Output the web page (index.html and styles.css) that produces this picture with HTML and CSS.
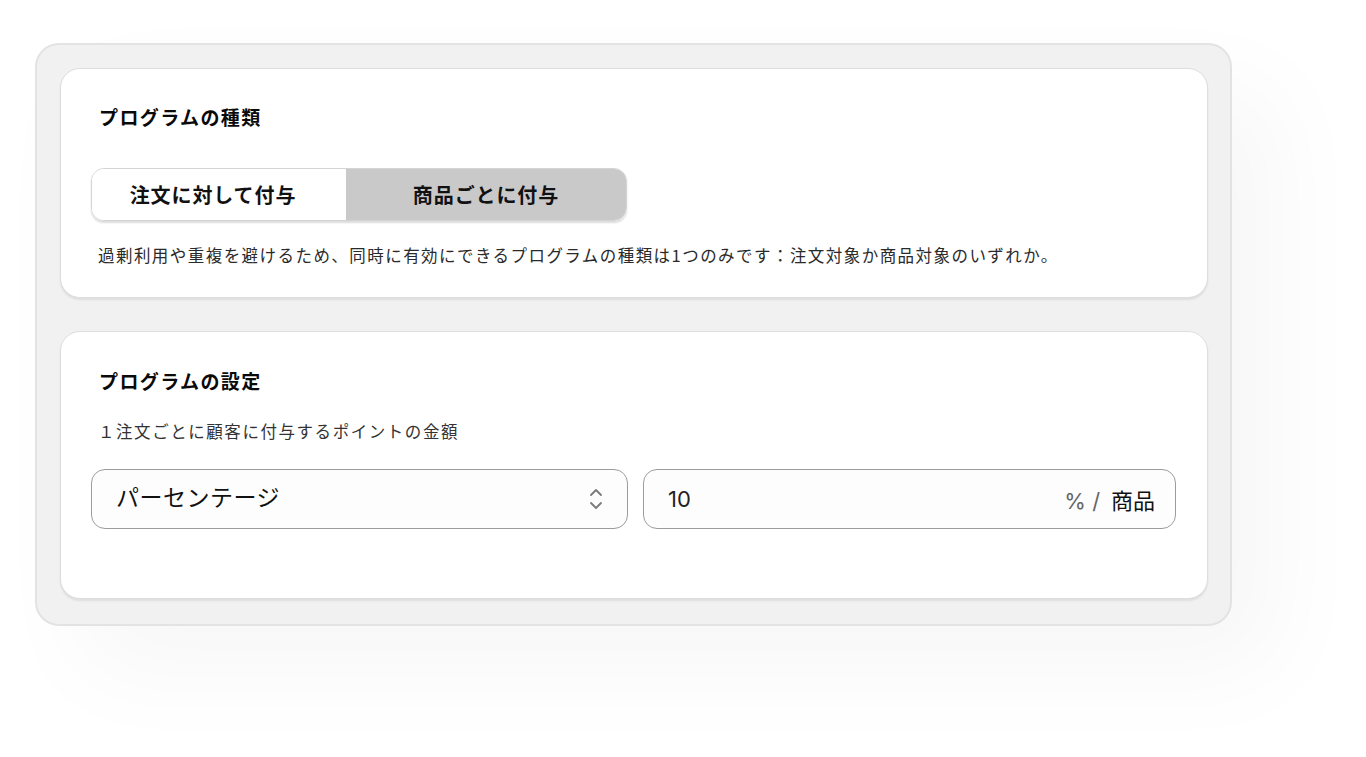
FILE: index.html
```html
<!DOCTYPE html>
<html lang="ja">
<head>
<meta charset="utf-8">
<link rel="stylesheet" href="styles.css">
</head>
<body>
<div class="shell">
  <section class="card card-type">
    <h2 class="title">プログラムの種類</h2>
    <div class="toggle">
      <div class="seg seg-left">注文に対して付与</div>
      <div class="seg seg-right">商品ごとに付与</div>
    </div>
    <p class="desc">過剰利用や重複を避けるため、同時に有効にできるプログラムの種類は1つのみです：注文対象か商品対象のいずれか。</p>
  </section>
  <section class="card card-settings">
    <h2 class="title">プログラムの設定</h2>
    <p class="sub">１注文ごとに顧客に付与するポイントの金額</p>
    <div class="fields">
      <div class="field select">
        <span class="val">パーセンテージ</span>
        <svg class="chev" width="14" height="26" viewBox="0 0 14 26" fill="none" stroke="#7a7a7a" stroke-width="1.8" stroke-linecap="round" stroke-linejoin="round"><path d="M2 9 L7 4 L12 9"/><path d="M2 17 L7 22 L12 17"/></svg>
      </div>
      <div class="field number">
        <span class="num">10</span>
        <span class="unit"><span class="pct">% /</span> 商品</span>
      </div>
    </div>
  </section>
</div>
</body>
</html>
```
FILE: styles.css
```css
* { box-sizing: border-box; }
html, body { margin: 0; padding: 0; background: #ffffff; }
body {
  font-family: "Noto Sans CJK JP", "Noto Sans", sans-serif;
  color: #111;
  width: 1366px;
  height: 757px;
  overflow: hidden;
}
.shell {
  margin: 43px 0 0 35px;
  width: 1197px;
  height: 583px;
  background: #f1f1f1;
  border: 2px solid #e3e3e5;
  border-radius: 24px;
  padding: 23px 22px 0 23px;
  display: flex;
  flex-direction: column;
  gap: 33px;
  box-shadow: 45px 45px 100px rgba(0,0,0,0.035);
}
.card {
  background: #fff;
  border: 1px solid #dedede;
  border-radius: 20px;
  box-shadow: 0 2px 2px rgba(0,0,0,0.08);
  padding: 36px 31px 0 30px;
}
.card-type { height: 230px; }
.card-settings { height: 268px; padding-top: 37px; }
.title {
  margin: 0 0 0 8px;
  font-size: 19px;
  line-height: 24px;
  font-weight: 700;
  letter-spacing: 1.4px;
  color: #0a0a0a;
}
.toggle {
  margin-top: 39px;
  display: flex;
  width: 536px;
  height: 53px;
  border-radius: 13px;
  border: 1px solid #d4d4d4;
  overflow: hidden;
  box-shadow: 0 2px 2px rgba(0,0,0,0.14);
}
.seg {
  display: flex;
  align-items: center;
  justify-content: center;
  font-size: 20px;
  font-weight: 700;
  letter-spacing: 0.9px;
  color: #111;
}
.seg-left { width: 254px; background: #fff; padding-right: 12px; }
.seg-right { flex: 1; background: #c9c9c9; }
.desc {
  margin: 22px 0 0 7px;
  font-size: 16.5px;
  line-height: 24px;
  letter-spacing: 1.45px;
  color: #2a2a2a;
  white-space: nowrap;
}
.sub {
  margin: 26px 0 0 7px;
  font-size: 16.5px;
  line-height: 24px;
  letter-spacing: 1.55px;
  color: #333;
}
.fields {
  margin-top: 26px;
  display: flex;
  gap: 15px;
}
.field {
  flex: 1;
  height: 60px;
  border: 1.5px solid #9c9c9c;
  border-radius: 14px;
  background: #fdfdfd;
  display: flex;
  align-items: center;
  justify-content: space-between;
}
.select { padding: 0 24px 0 24px; }
.select .val {
  font-size: 23px;
  letter-spacing: 0.5px;
  color: #111;
  margin-top: -6px;
}
.chev { display: block; }
.number { padding: 0 20px 0 24px; }
.num {
  font-family: "Inter", "Noto Sans", sans-serif;
  font-size: 22px;
  color: #222;
}
.unit {
  font-size: 22px;
  color: #111;
}
.pct {
  font-family: "Inter", "Noto Sans", sans-serif;
  color: #666;
  margin-right: 6px;
}
```
